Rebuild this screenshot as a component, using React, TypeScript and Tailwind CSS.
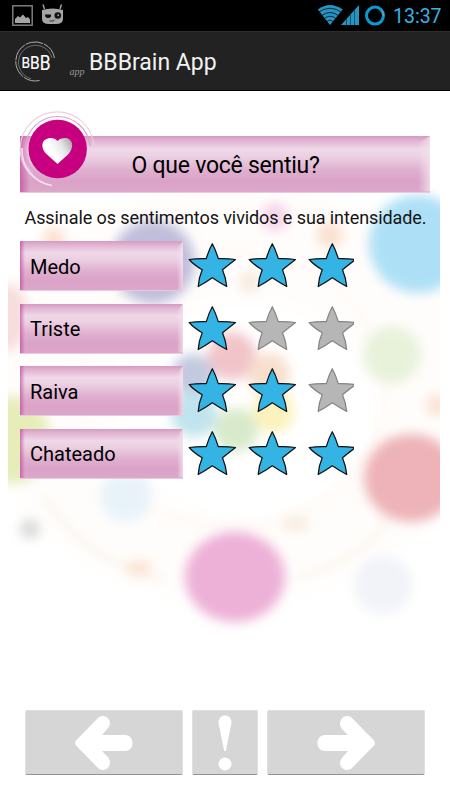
import React from "react";

const feelings = [
  { name: "Medo", level: 3 },
  { name: "Triste", level: 1 },
  { name: "Raiva", level: 2 },
  { name: "Chateado", level: 3 },
];

function StatusBar() {
  return (
    <div className="flex h-[31px] items-center bg-black pl-3 pr-[8px]">
      <svg width="54" height="31" viewBox="12 0 54 31">
        <rect x="12.8" y="5.8" width="19.4" height="19.4" fill="none" stroke="#858585" strokeWidth="1.4" />
        <path d="M15 23V19L18 16L20 17.5L23 14.5L26 18L28 17L30 19.5V23Z" fill="#a5a5a5" />
        <path d="M44.5 9L43 4.5M60 9L61.5 4.5" stroke="#a5a5a5" strokeWidth="1.4" />
        <path d="M42 10Q52.500 7 63 10V19Q63 24 56 24H49Q42 24 42 19Z" fill="#a5a5a5" />
        <path d="M45 14.500H51V16.500Q50 18 48 18Q45 18 45 14.500Z" fill="#111" />
        <circle cx="57.8" cy="15.500" r="3.300" fill="#111" />
        <circle cx="58.200" cy="15.300" r="1" fill="#999" />
        <path d="M49.500 21H53L54.500 20" stroke="#333" strokeWidth="1" fill="none" />
      </svg>
      <svg className="ml-auto" width="70" height="31" viewBox="317 0 70 31">
        <path d="M330 25L317.800 9.500Q330 0.500 342.700 9.500Z" fill="#2794bf" />
        <path d="M318 12.500Q330 4 342 12.500M321 16Q330 9 339 16M323.500 19Q330 13.500 336.500 19M326.500 22Q330 18.500 333.500 22" fill="none" stroke="#001722" strokeWidth="0.850" />
        <path d="M341 25L359 5V25Z" fill="#2794bf" />
        <path d="M346.500 19V25M350.500 15V25M354.500 10V25" stroke="#0b526e" strokeWidth="1" />
        <circle cx="375" cy="15.600" r="8.500" fill="none" stroke="#079bd1" strokeWidth="3" />
        <path d="M382 10.500Q384 13 383.500 16" stroke="#7b9aa5" strokeWidth="1.300" fill="none" />
      </svg>
      <span className="ml-[6px] w-[49px] whitespace-nowrap pt-[2px] text-[19.5px] leading-[29px] text-[#33b5e5]">13:37</span>
    </div>
  );
}

function AppBar() {
  return (
    <header className="flex h-[60px] items-center border-b border-t border-b-black border-t-[#2d2d2d] bg-[#222]">
      <svg width="89" height="58" viewBox="0 32 89 58" className="shrink-0">
        <g fill="none" stroke="#bdbdbd" strokeWidth="0.900">
          <path d="M54.500 58A19.500 19.500 0 1 0 39.500 80.500" strokeDasharray="18 1" />
          <path d="M52 58A17 17 0 1 0 31 78.700" stroke="#777" />
        </g>
        <text x="21.500" y="70" fontSize="17.500" fill="#fff" stroke="#fff" strokeWidth="0.150" fontFamily="Roboto, sans-serif" textLength="29" lengthAdjust="spacingAndGlyphs">
          <tspan fontSize="15.500" dy="-2.500">B</tspan>
          <tspan fontSize="17.500" dy="1">B</tspan>
          <tspan fontSize="19.500" dy="1.500">B</tspan>
        </text>
        <text x="69.500" y="74.500" fontSize="9.500" fill="#999" fontFamily="Liberation Serif, serif" fontStyle="italic" textLength="15" lengthAdjust="spacingAndGlyphs">app</text>
      </svg>
      <h1 className="whitespace-nowrap pt-[4px] text-[23px] text-[#f2f2f2]">BBBrain App</h1>
    </header>
  );
}

function Backdrop() {
  return (
    <svg className="absolute left-2 top-[180px] -z-10" width="432" height="480" viewBox="8 180 432 480" aria-hidden="true">
      <defs>
        <filter id="soft" x="-80%" y="-80%" width="260%" height="260%"><feGaussianBlur stdDeviation="6" /></filter>
        <filter id="wide" x="-50%" y="-50%" width="200%" height="200%"><feGaussianBlur stdDeviation="13" /></filter>
        <filter id="line" x="-20%" y="-20%" width="140%" height="140%"><feGaussianBlur stdDeviation="4" /></filter>
      </defs>
      <g filter="url(#wide)">
        <ellipse cx="233" cy="390" rx="248" ry="210" fill="#fffdfb" />
        <ellipse cx="245" cy="410" rx="135" ry="110" fill="#fff" />
      </g>
      <g filter="url(#line)">
        <ellipse cx="233" cy="390" rx="153" ry="137" fill="none" stroke="#fefaf6" strokeWidth="7" />
        <path d="M44 495Q80 560 165 580M300 577Q375 555 390 510" fill="none" stroke="#fbf7f1" strokeWidth="7" />
      </g>
      <g filter="url(#soft)">
        <circle cx="153" cy="262" r="42" fill="#bfbedb" />
        <circle cx="418" cy="244" r="49" fill="#ade0f6" />
        <ellipse cx="8" cy="317" rx="20" ry="34" fill="#f7dddd" />
        <ellipse cx="12" cy="440" rx="39" ry="44" fill="#e6edb9" />
        <circle cx="275" cy="217" r="14" fill="#f6d3e9" />
        <circle cx="54" cy="239" r="11" fill="#fbdfcc" />
        <circle cx="330" cy="235" r="13" fill="#fae0cf" />
        <circle cx="250" cy="282" r="11" fill="#f7ebe0" />
        <circle cx="232" cy="356" r="24" fill="#f1c4c9" />
        <circle cx="193" cy="375" r="21" fill="#c3c9df" />
        <circle cx="269" cy="374" r="21" fill="#f8dfcd" />
        <circle cx="194" cy="414" r="23" fill="#c0e4ed" />
        <circle cx="236" cy="430" r="22" fill="#d8eaca" />
        <circle cx="273" cy="412" r="21" fill="#fbf2bd" />
        <circle cx="392" cy="355" r="29" fill="#e8f2db" />
        <ellipse cx="411" cy="478" rx="47" ry="44" fill="#edb3b8" />
        <ellipse cx="235" cy="577" rx="50" ry="45" fill="#edb0d7" />
        <circle cx="126" cy="496" r="26" fill="#e8f3f9" />
        <circle cx="30" cy="529" r="10" fill="#dad9d8" />
        <ellipse cx="139" cy="568" rx="13" ry="8" fill="#fbe3d4" />
        <ellipse cx="296" cy="524" rx="14" ry="7" fill="#f7ebde" />
        <circle cx="437" cy="405" r="11" fill="#fbe2d3" />
        <circle cx="383" cy="585" r="29" fill="#f1f3f8" />
      </g>
    </svg>
  );
}

function Panel({ children, className }: { children: React.ReactNode; className: string }) {
  return (
    <div className={"relative flex items-center border-b border-b-[#e9c9de] bg-[linear-gradient(#d69ac1_0%,#e2b6d3_9%,#efd8e8_24%,#ecd1e3_36%,#dfafcf_62%,#daa2c7_82%,#dca8ca_100%)] text-black before:absolute before:inset-y-0 before:left-0 before:bg-[linear-gradient(90deg,#c2479bb0,transparent)] after:absolute after:inset-y-0 after:right-0 after:bg-[linear-gradient(270deg,#f5e3eecc,#f5e3ee00)] after:[clip-path:polygon(0_7px,100%_0,100%_100%,0_100%)] " + className}>
      {children}
    </div>
  );
}

function Heart() {
  return (
    <svg className="absolute -left-1 -top-7 z-10" width="80" height="82" viewBox="16 108 80 82">
      <defs>
        <linearGradient id="heart" x1="0.350" y1="0.500" x2="1" y2="0.150">
          <stop offset="0" stopColor="#fff" /><stop offset="0.500" stopColor="#e5e5e5" /><stop offset="1" stopColor="#a8a8a8" />
        </linearGradient>
      </defs>
      <g fill="none">
        <path d="M94 146A37 37 0 1 0 52 185.500" stroke="#efcfe3" strokeWidth="1.100" />
        <path d="M90 146A32.500 32.500 0 1 0 52 181" stroke="#dfa1c9" strokeWidth="1.200" />
        <path d="M22 148A36 36 0 0 0 52 185.500" stroke="#f4deec" strokeWidth="1.700" />
      </g>
      <circle cx="57.700" cy="149" r="29.200" fill="#c6007e" />
      <path d="M57.500 164L47 154.500C41 149 41 141.500 46 139.200C50.500 137 55.500 138.200 57.500 141C60 138 66 137 69.300 139.200C74 142.500 72.500 150 68 154.500Z" fill="url(#heart)" />
    </svg>
  );
}

function Star({ on, last }: { on: boolean; last: boolean }) {
  return (
    <svg className="shrink-0" width={last ? 51 : 60} height="50" viewBox={last ? "0 0 51 50" : "0 0 60 50"}>
      <path d="M29.300 2.700Q32.500 8.500 35.300 17.600Q44 17.300 52.500 18.500Q46 23.500 39.500 28.700Q43 37 43.700 45.500Q37 42 29.300 36.800Q22 42 15.200 45.500Q15.700 37 19.200 28.700Q11 24 6.200 18.500Q14 17.300 23.300 17.600Q26 8.500 29.300 2.700Z" fill={on ? "#33b4e5" : "#b6b6b6"} stroke={on ? "#101010" : "#858585"} strokeWidth="1.250" strokeLinejoin="round" />
    </svg>
  );
}

function ArrowButton({ forward }: { forward?: boolean }) {
  return (
    <button aria-label={forward ? "Avançar" : "Voltar"} className="flex h-[65px] w-[158px] items-center justify-center rounded-[2px] border border-[#dfdfdf] border-b-[#929292] bg-[#d6d6d6]">
      <svg width="58" height="56" viewBox="0 0 58 56" className={forward ? "rotate-180" : ""}>
        <path d="M1.500 25L23 3C30-3 39 6 33 13L27 20H50C60 20 60 36 50 36H27L33 42C39 50 30 59 23 53L1.500 31Q-1.500 28 1.500 25Z" fill="#fff" />
      </svg>
    </button>
  );
}

export default function App() {
  return (
    <div className="relative isolate h-[800px] w-[450px] overflow-hidden bg-white font-['Roboto',sans-serif]">
      <Backdrop />
      <StatusBar />
      <AppBar />
      <main className="flex h-[709px] flex-col pt-[45px]">
        <div className="relative mx-5">
          <Heart />
          <Panel className="h-[56.500px] pl-[111.500px] pt-[5px] before:w-[10px] after:w-[12px]">
            <h2 className="whitespace-nowrap text-[23px] tracking-[-0.250px]">O que você sentiu?</h2>
          </Panel>
        </div>
        <p className="mt-[14.500px] h-[21px] whitespace-nowrap pl-[24.500px] text-[18px] leading-[21px] tracking-[-0.090px] text-[#141414]">Assinale os sentimentos vividos e sua intensidade.</p>
        <div className="mt-[13px] flex flex-col gap-[12.500px] pl-5">
          {feelings.map(({ name, level }) => (
            <div key={name} className="flex h-[50px]">
              <Panel className="w-[163px] shrink-0 pl-[10px] pt-[2px] text-[20px] before:w-[5px] after:w-[6px]">{name}</Panel>
              <div className="flex">
                {[1, 2, 3].map((n) => <Star key={n} on={n <= level} last={n === 3} />)}
              </div>
            </div>
          ))}
        </div>
        <nav className="mb-[25px] mt-auto flex justify-center gap-[9px]">
          <ArrowButton />
          <button aria-label="Atenção" className="flex h-[65px] w-[66px] items-center justify-center rounded-[2px] border border-[#dfdfdf] border-b-[#929292] bg-[#d6d6d6]">
            <svg width="14" height="56" viewBox="0 0 14 56">
              <path d="M0.500 8C0-2 14-2 13.500 8L7.800 36H6.200Z" fill="#fff" />
              <circle cx="7" cy="49" r="6.500" fill="#fff" />
            </svg>
          </button>
          <ArrowButton forward />
        </nav>
      </main>
    </div>
  );
}
